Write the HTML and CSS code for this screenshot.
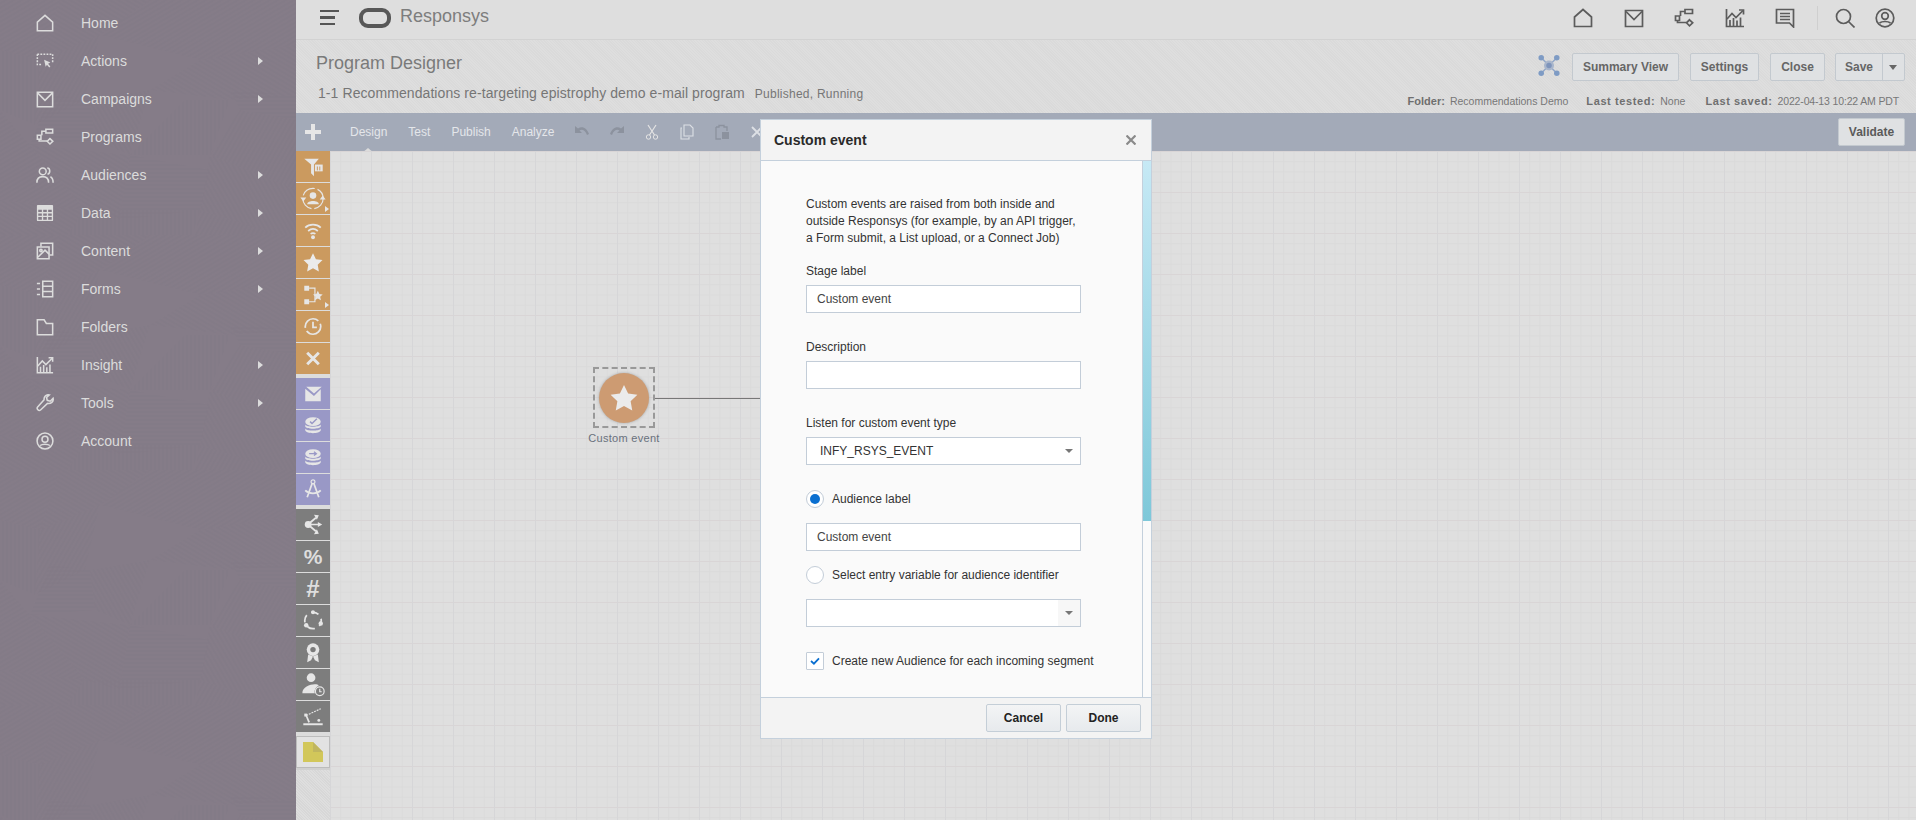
FILE: index.html
```html
<!DOCTYPE html>
<html lang="en">
<head>
<meta charset="utf-8">
<title>Program Designer - Responsys</title>
<link rel="stylesheet" href="styles.css">
</head>
<body>
<svg class="defs" width="0" height="0" aria-hidden="true">
  <defs>
    <symbol id="i-home" viewBox="0 0 20 20"><path d="M1.500 9 10 1.500 18.500 9V18.500H1.500Z"/></symbol>
    <symbol id="i-mail" viewBox="0 0 20 20"><path d="M1.500 2.500H18.500V18.500H1.500Z"/><path d="M2 3.500 10 11.500 18 3.500"/></symbol>
    <symbol id="i-prog" viewBox="0 0 20 20"><path d="M11 1.500H18.500V5.500H11Z"/><path d="M11 3.500H6.500V8"/><path d="M1.500 8H5.500V12.500H1.500Z"/><path d="M3.500 12.500V14.500H12.500"/><path d="M15.500 11.800 18.700 14.800 15.500 17.800 12.500 14.800Z"/></symbol>
    <symbol id="i-actions" viewBox="0 0 20 20"><path stroke-dasharray="2 1.400" d="M1.500 2.500H18.500V12M1.500 2.500V14H7"/><path class="solid" d="M9 8.500 16 11.700 13.400 13 16 16 14.700 17.200 12.200 14.200 10.700 16.500Z"/></symbol>
    <symbol id="i-aud" viewBox="0 0 20 20"><circle cx="7.500" cy="6" r="3.800"/><path d="M1 18.500C1 14 3.500 11.800 7.500 11.800S14 14 14 18.500"/><path d="M12.500 2.300C15.800 2.300 16.500 7.800 12.800 9.300"/><path d="M16 12C18 13 19 15 19 18.500"/></symbol>
    <symbol id="i-data" viewBox="0 0 20 20"><path class="solid" d="M2 1H18A1 1 0 0 1 19 2V18A1 1 0 0 1 18 19H2A1 1 0 0 1 1 18V2A1 1 0 0 1 2 1ZM2.500 6.500V9H6.500V6.500ZM8 6.500V9H12V6.500ZM13.500 6.500V9H17.500V6.500ZM2.500 10.500V13H6.500V10.500ZM8 10.500V13H12V10.500ZM13.500 10.500V13H17.500V10.500ZM2.500 14.500V17.500H6.500V14.500ZM8 14.500V17.500H12V14.500ZM13.500 14.500V17.500H17.500V14.500Z" fill-rule="evenodd"/></symbol>
    <symbol id="i-content" viewBox="0 0 20 20"><path d="M5.500 5V1.500H18.500V14.500H15"/><path d="M1.500 5.500H14.500V18.500H1.500Z"/><circle cx="5.500" cy="9.500" r="1.300"/><path d="M2 17 10 9 14.500 13.500"/></symbol>
    <symbol id="i-forms" viewBox="0 0 20 20"><path d="M7.500 1.500H18.500V18.500H7.500Z"/><path d="M7.500 7H18.500M7.500 12.800H18.500"/><path d="M1 4H4.500M1 10H4.500M1 16H4.500"/></symbol>
    <symbol id="i-folder" viewBox="0 0 20 20"><path d="M1.500 2H9L11.500 6H18.500V18.500H1.500Z"/></symbol>
    <symbol id="i-insight" viewBox="0 0 20 20"><path d="M1.500 1V18.500H19"/><path d="M2 11 7 5.500 11 9.500 18 2.500"/><path d="M14 2H18.500V6.500"/><path d="M5 18V12M8.500 18V10M12 18V12.500M15.500 18V9.500"/></symbol>
    <symbol id="i-tools" viewBox="0 0 20 20"><path d="M19 4.800 15.800 8 12.500 7 11.700 3.800 14.800 1C11.500 .2 8.500 2.800 9 6.500L1.800 14.500C.2 16.500 3 19.500 5 17.800L12.800 10.500C16.500 11.300 19.800 8.300 19 4.800Z"/></symbol>
    <symbol id="i-acct" viewBox="0 0 20 20"><circle cx="10" cy="10" r="8.800"/><circle cx="10" cy="8" r="3.300"/><path d="M4.500 15C7 13 13 13 15.500 15"/></symbol>
    <symbol id="i-msg" viewBox="0 0 20 20"><path d="M1.500 1.500H18.500V19L14.500 15H1.500Z"/><path d="M5 5.500H15M5 8.500H15M5 11.500H15"/></symbol>
    <symbol id="i-search" viewBox="0 0 20 20"><circle cx="8.500" cy="8.500" r="7"/><path d="M13.500 13.500 19.500 19.500"/></symbol>
    <symbol id="i-star" viewBox="0 0 24 24"><path class="solid" d="M12 1.500 15.300 8.300 22.700 9.300 17.300 14.500 18.600 22 12 18.400 5.400 22 6.700 14.500 1.300 9.300 8.700 8.300Z"/></symbol>
  </defs>
</svg>

<div class="page">
  <nav class="side">
    <svg class="texture" width="296" height="820" aria-hidden="true">
      <defs>
        <pattern id="h0" width="4" height="4" patternUnits="userSpaceOnUse"><path d="M0 1H4" stroke="#7c7380" stroke-width="1"/></pattern>
        <pattern id="h90" width="4" height="4" patternUnits="userSpaceOnUse" patternTransform="rotate(90)"><path d="M0 1H4" stroke="#7c7380" stroke-width="1"/></pattern>
        <pattern id="h30" width="4" height="4" patternUnits="userSpaceOnUse" patternTransform="rotate(30)"><path d="M0 1H4" stroke="#7c7380" stroke-width="1"/></pattern>
        <pattern id="h60" width="4" height="4" patternUnits="userSpaceOnUse" patternTransform="rotate(60)"><path d="M0 1H4" stroke="#7c7380" stroke-width="1"/></pattern>
        <pattern id="h120" width="4" height="4" patternUnits="userSpaceOnUse" patternTransform="rotate(120)"><path d="M0 1H4" stroke="#7c7380" stroke-width="1"/></pattern>
        <pattern id="h150" width="4" height="4" patternUnits="userSpaceOnUse" patternTransform="rotate(150)"><path d="M0 1H4" stroke="#7c7380" stroke-width="1"/></pattern>
        <g id="tile" opacity=".4">
          <path fill="url(#h150)" d="M0 0H60L40 60 0 50Z"/>
          <path fill="url(#h30)" d="M60 0H150L100 35 40 60Z"/>
          <path fill="url(#h90)" d="M0 50 40 60 35 125 0 110Z"/>
          <path fill="url(#h120)" d="M40 60 100 35 85 100 35 125Z"/>
          <path fill="url(#h0)" d="M50 95 90 100 95 140 30 145Z"/>
          <path fill="url(#h60)" d="M90 100 150 90 130 155 95 140Z"/>
          <path fill="url(#h150)" d="M150 0H296V45L200 60 100 35Z"/>
          <path fill="url(#h30)" d="M200 60 296 45V95L230 100 150 90Z"/>
          <path fill="url(#h90)" d="M185 100 230 100 210 155 130 155Z"/>
          <path fill="url(#h0)" d="M230 90 296 95V120L240 110Z"/>
          <path fill="url(#h120)" d="M240 110 296 120V190L210 155Z"/>
          <path fill="url(#h150)" d="M0 110 30 145 85 210 0 200Z"/>
          <path fill="url(#h30)" d="M30 145 130 155 120 220 85 210Z"/>
          <path fill="url(#h0)" d="M130 155 210 170 200 210 120 220Z"/>
          <path fill="url(#h60)" d="M210 155 296 190V240L200 210Z"/>
          <path fill="url(#h30)" d="M0 200 85 210 60 245 0 240Z"/>
          <path fill="url(#h90)" d="M85 210 200 210 190 245 60 245Z"/>
          <path fill="url(#h120)" d="M200 210 296 240V260H190Z"/>
        </g>
        <pattern id="tilep" width="296" height="235" patternUnits="userSpaceOnUse"><use href="#tile"/></pattern>
      </defs>
      <rect width="296" height="820" fill="url(#tilep)"/>
    </svg>
    <ul class="menu">
      <li class="mi"><svg class="ic"><use href="#i-home"/></svg><span class="ml">Home</span></li>
      <li class="mi"><svg class="ic"><use href="#i-actions"/></svg><span class="ml">Actions</span><i class="arr"></i></li>
      <li class="mi"><svg class="ic"><use href="#i-mail"/></svg><span class="ml">Campaigns</span><i class="arr"></i></li>
      <li class="mi"><svg class="ic"><use href="#i-prog"/></svg><span class="ml">Programs</span></li>
      <li class="mi"><svg class="ic"><use href="#i-aud"/></svg><span class="ml">Audiences</span><i class="arr"></i></li>
      <li class="mi"><svg class="ic"><use href="#i-data"/></svg><span class="ml">Data</span><i class="arr"></i></li>
      <li class="mi"><svg class="ic"><use href="#i-content"/></svg><span class="ml">Content</span><i class="arr"></i></li>
      <li class="mi"><svg class="ic"><use href="#i-forms"/></svg><span class="ml">Forms</span><i class="arr"></i></li>
      <li class="mi"><svg class="ic"><use href="#i-folder"/></svg><span class="ml">Folders</span></li>
      <li class="mi"><svg class="ic"><use href="#i-insight"/></svg><span class="ml">Insight</span><i class="arr"></i></li>
      <li class="mi"><svg class="ic"><use href="#i-tools"/></svg><span class="ml">Tools</span><i class="arr"></i></li>
      <li class="mi"><svg class="ic"><use href="#i-acct"/></svg><span class="ml">Account</span></li>
    </ul>
  </nav>

  <main class="main">
    <header class="top">
      <div class="burger"><b></b><b class="short"></b><b class="short"></b></div>
      <div class="oval"></div>
      <span class="brand">Responsys</span>
      <div class="topicons">
        <svg class="ti"><use href="#i-home"/></svg>
        <svg class="ti"><use href="#i-mail"/></svg>
        <svg class="ti"><use href="#i-prog"/></svg>
        <svg class="ti"><use href="#i-insight"/></svg>
        <svg class="ti"><use href="#i-msg"/></svg>
        <span class="tsep"></span>
        <svg class="ti ti-s"><use href="#i-search"/></svg>
        <svg class="ti ti-a"><use href="#i-acct"/></svg>
      </div>
    </header>

    <section class="head">
      <div class="head-left">
        <h1 class="title">Program Designer</h1>
        <p class="sub">1-1 Recommendations re-targeting epistrophy demo e-mail program<span class="status">Published, Running</span></p>
      </div>
      <div class="head-right">
        <div class="actions">
          <svg class="netic" viewBox="0 0 24 24"><path d="M4 4 20 20M20 4 4 20" stroke="#8fa6c8" stroke-width="1.500" fill="none"/><circle cx="12" cy="12" r="5.500" fill="#a9b6cc"/><circle cx="12" cy="12" r="3" fill="#7e94bb"/><circle cx="3.500" cy="3.500" r="3" fill="#7e9bc4"/><circle cx="20.500" cy="3.500" r="3" fill="#7e9bc4"/><circle cx="3.500" cy="20.500" r="3" fill="#7e9bc4"/><circle cx="20.500" cy="20.500" r="3" fill="#7e9bc4"/></svg>
          <button class="btn b-sum">Summary View</button>
          <button class="btn b-set">Settings</button>
          <button class="btn b-clo">Close</button>
          <button class="btn b-save"><span class="st">Save</span><span class="caret"></span></button>
        </div>
        <div class="meta">
          <b class="mf">Folder:</b><span class="mv mv1">Recommendations Demo</span>
          <b>Last tested:</b><span class="mv mv2">None</span>
          <b>Last saved:</b><span class="mv mv3">2022-04-13 10:22 AM PDT</span>
        </div>
      </div>
    </section>

    <div class="bar">
      <svg class="plus" viewBox="0 0 14 14"><path d="M7 0V14M0 7H14" stroke="#e6e6e6" stroke-width="3.500"/></svg>
      <div class="tabs">
        <a class="tab on">Design</a><a class="tab">Test</a><a class="tab">Publish</a><a class="tab">Analyze</a>
      </div>
      <div class="tools">
        <svg class="tb" viewBox="0 0 16 16"><path d="M1 2V9H8L5.500 6.500C8 5 11 6 13 11L15 10C13 4 8 1.500 4 4.500Z" fill="#8c929e"/></svg>
        <svg class="tb" viewBox="0 0 16 16"><path d="M15 2V9H8L10.500 6.500C8 5 5 6 3 11L1 10C3 4 8 1.500 12 4.500Z" fill="#8c929e"/></svg>
        <svg class="tb" viewBox="0 0 16 16"><path d="M4 1 10.500 11M12 1 5.500 11" stroke="#e4e4e4" stroke-width="1.200" fill="none"/><circle cx="4.500" cy="13" r="2.200" stroke="#e4e4e4" fill="none"/><circle cx="11.500" cy="13" r="2.200" stroke="#e4e4e4" fill="none"/></svg>
        <svg class="tb" viewBox="0 0 16 16"><path d="M5 1H11L14 4V12H5Z M3 4H2V15H10V13" stroke="#dde0e5" stroke-width="1.100" fill="none"/></svg>
        <svg class="tb" viewBox="0 0 16 16"><path d="M2 3H5V1.500H10V3H13V7M7 15H2V3" stroke="#8c929e" stroke-width="1.300" fill="none"/><path d="M8 8H15V15H8Z" fill="#8c929e"/></svg>
        <svg class="tb" viewBox="0 0 16 16"><path d="M3 3 13 13M13 3 3 13" stroke="#dde0e5" stroke-width="1.800"/></svg>
      </div>
      <button class="btn validate">Validate</button>
    </div>

    <div class="work">
      <aside class="palette">
        <div class="pgroup">
          <div class="pi or"><svg viewBox="0 0 32 32"><path class="pf" d="M7 8H22L17 14V26L14 23V14Z"/><path class="pf" d="M18 14H26V21H18Z"/><path d="M20.500 16V20M23 16V20" stroke="#cb9a5f"/></svg></div>
          <div class="pi or mark"><svg viewBox="0 0 32 32"><circle cx="16" cy="16" r="10.500" class="ps" stroke-dasharray="15 3"/><circle cx="16" cy="13" r="3.400" class="pf"/><path class="pf" d="M10 22C10 17.500 22 17.500 22 22Z"/><path class="pf" d="M3 15 9 15 6 19ZM29 17 23 17 26 13Z"/></svg></div>
          <div class="pi or"><svg viewBox="0 0 32 32"><path class="ps w2" d="M8 13C12 9 20 9 24 13M11 16.500C14 14 18 14 21 16.500M13.500 19.500C15 18.500 17 18.500 18.500 19.500"/><circle class="pf" cx="16" cy="23" r="2"/></svg></div>
          <div class="pi or"><svg viewBox="0 0 32 32"><use href="#i-star" class="star-w" x="5" y="5" width="22" height="22"/></svg></div>
          <div class="pi or mark"><svg viewBox="0 0 32 32"><path class="pf" d="M7 7H12V12H7ZM7 21H12V26H7Z"/><path class="ps" d="M12 9.500H18V23.500H12"/><path class="pf" d="M21 12 22.600 15.500 26 16 23.400 18.300 24.200 22 21 20 17.800 22 18.600 18.300 16 16 19.400 15.500Z"/></svg></div>
          <div class="pi or"><svg viewBox="0 0 32 32"><circle class="ps w2" cx="16" cy="16" r="8" stroke-dasharray="20 3.500"/><path class="ps w2" d="M16 11V17H20"/></svg></div>
          <div class="pi or"><svg viewBox="0 0 32 32"><path class="ps w3" d="M10 10 22 22M22 10 10 22"/></svg></div>
        </div>
        <div class="pgroup">
          <div class="pi pu"><svg viewBox="0 0 32 32"><path class="pf" d="M9 9H25L17 16ZM8 11 17 18.500 24 11.500V24H8Z"/></svg></div>
          <div class="pi pu"><svg viewBox="0 0 32 32"><ellipse class="pf" cx="16" cy="12" rx="8" ry="4.500"/><path class="pf" d="M8 15C9 18 23 18 24 15V17C23 20 9 20 8 17ZM8 19C9 22 23 22 24 19V21C23 25 9 25 8 21Z"/><path d="M13 12 15 14 20 9" stroke="#9998c6" stroke-width="1.500" fill="none"/></svg></div>
          <div class="pi pu"><svg viewBox="0 0 32 32"><ellipse class="pf" cx="16" cy="12" rx="8" ry="4.500"/><path class="pf" d="M8 15C9 18 23 18 24 15V17C23 20 9 20 8 17ZM8 19C9 22 23 22 24 19V21C23 25 9 25 8 21Z"/><path d="M12 12H19M17 10 19.500 12 17 14" stroke="#9998c6" stroke-width="1.300" fill="none"/></svg></div>
          <div class="pi pu"><svg viewBox="0 0 32 32"><circle class="ps" cx="16" cy="8" r="2"/><path class="ps w2" d="M15 10 10 24M17 10 22 24M8 17C12 21 20 21 24 17"/></svg></div>
        </div>
        <div class="pgroup">
          <div class="pi gr"><svg viewBox="0 0 32 32"><circle class="pf" cx="11" cy="16" r="3.500"/><path class="ps w2" d="M12 15 19 9M12 16H23M12 17 19 23"/><path class="pf" d="M17 6 22 6.500 20 11ZM21 13.500 25.500 16 21 18.500ZM17 26 22 25.500 20 21Z"/></svg></div>
          <div class="pi gr"><span class="sym pct">%</span></div>
          <div class="pi gr"><span class="sym">#</span></div>
          <div class="pi gr"><svg viewBox="0 0 32 32"><circle class="ps w2" cx="16" cy="16" r="8.500" stroke-dasharray="8 5.300" stroke-dashoffset="2"/><circle class="pf" cx="16" cy="7.500" r="2"/><circle class="pf" cx="24" cy="19" r="2.300"/><circle class="pf" cx="9" cy="21" r="2.300"/></svg></div>
          <div class="pi gr"><svg viewBox="0 0 32 32"><circle class="pf" cx="16" cy="13" r="6.500"/><circle cx="16" cy="13" r="2.800" fill="#7b7b7b"/><path class="pf" d="M11 18 10 26 14 24 16 20ZM21 18 22 26 18 24 16 20Z"/></svg></div>
          <div class="pi gr"><svg viewBox="0 0 32 32"><circle class="pf" cx="14" cy="9" r="4.500"/><path class="pf" d="M5 25C5 16 20 14 22 17 18 19 17 23 18 25Z"/><circle class="ps" cx="23" cy="23" r="4.500"/><path class="ps" d="M23 20.500V23.500H25"/></svg></div>
          <div class="pi gr"><svg viewBox="0 0 32 32"><path class="ps" stroke-dasharray="2 1" d="M9 15 24 8"/><path class="ps w2" d="M9 15 12 22"/><circle class="pf" cx="22" cy="20" r="1.500"/><path class="pf" d="M6 23H26V25H6Z"/><path class="pf" d="M7 13H10V16H7Z"/></svg></div>
        </div>
        <div class="note"><svg viewBox="0 0 20 20"><path d="M0 0H10L20 10V20H0Z" fill="#d2c75a"/><path d="M10 0 20 10H10Z" fill="#c0b65f"/></svg></div>
      </aside>

      <div class="canvas">
        <div class="conn"></div>
        <div class="node">
          <div class="nbox"><div class="ncirc"><svg viewBox="0 0 24 24"><use href="#i-star" class="star-w"/></svg></div></div>
          <div class="nlabel">Custom event</div>
        </div>
      </div>
    </div>
  </main>

  <div class="modal">
    <div class="m-head"><span class="m-title">Custom event</span><svg class="m-x" viewBox="0 0 10 10"><path d="M.5 .5 9.500 9.500M9.500 .5 .5 9.500" stroke="#8a8a8a" stroke-width="2.200"/></svg></div>
    <div class="m-body">
      <div class="m-form">
        <p class="intro">Custom events are raised from both inside and<br>outside Responsys (for example, by an API trigger,<br>a Form submit, a List upload, or a Connect Job)</p>
        <label class="lab l1">Stage label</label>
        <div class="field"><span class="fv">Custom event</span></div>
        <label class="lab l2">Description</label>
        <div class="field"></div>
        <label class="lab l2">Listen for custom event type</label>
        <div class="field sel"><span class="sv">INFY_RSYS_EVENT</span><span class="sa"><i></i></span></div>
        <div class="opt o1"><span class="radio on"></span><span>Audience label</span></div>
        <div class="field f3"><span class="fv">Custom event</span></div>
        <div class="opt o2"><span class="radio"></span><span>Select entry variable for audience identifier</span></div>
        <div class="field sel f4"><span class="sv"></span><span class="sa grey"><i></i></span></div>
        <div class="opt o3"><span class="check"><svg viewBox="0 0 18 18"><path d="M4.500 9 7.800 12 13.500 6" stroke="#0a6fd0" stroke-width="2" fill="none"/></svg></span><span>Create new Audience for each incoming segment</span></div>
      </div>
      <div class="scroll"><div class="thumb"></div></div>
    </div>
    <div class="m-foot"><button class="mb">Cancel</button><button class="mb">Done</button></div>
  </div>
</div>
</body>
</html>
```

FILE: styles.css
```css
* { box-sizing: border-box; }
html, body { margin: 0; padding: 0; height: 100%; }
body { font-family: "Liberation Sans", Arial, sans-serif; overflow: hidden; background: #dcdcdc; }
.defs { position: absolute; }
.solid { fill: currentColor; stroke: none; }

.page { display: flex; width: 1916px; height: 820px; position: relative; overflow: hidden; }

/* sidebar */
.side { width: 296px; flex: none; height: 820px; background: #857c88; position: relative; color: #ddd; }
.texture { position: absolute; left: 0; top: 0; }
.menu { list-style: none; margin: 0; padding: 4px 0 0; position: relative; }
.mi { display: flex; align-items: center; height: 38px; padding-left: 36px; position: relative; }
.ic { width: 18px; height: 18px; fill: none; stroke: currentColor; stroke-width: 1.700; color: #dcdcdc; flex: none; }
.ml { margin-left: 27px; font-size: 14px; color: #dcdcdc; }
.arr { position: absolute; left: 258px; top: 15px; width: 0; height: 0; border-left: 5px solid #dcdcdc; border-top: 4.500px solid transparent; border-bottom: 4.500px solid transparent; }

/* main column */
.main { flex: 1; min-width: 0; display: flex; flex-direction: column; height: 820px; }
.top { height: 40px; flex: none; display: flex; align-items: center; background: #dedede; border-bottom: 1px solid #d2d2d2; padding-left: 24px; }
.burger { width: 19px; display: flex; flex-direction: column; gap: 4px; margin-top: -4px; }
.burger b { display: block; height: 2.500px; width: 19px; background: #555; }
.burger .short { width: 15px; }
.oval { width: 32px; height: 20px; margin-left: 20px; border: 4px solid #575757; border-radius: 9px; margin-top: -4px; }
.brand { margin-left: 9px; font-size: 18px; color: #7d7d7d; margin-top: -6px; }
.topicons { margin-left: auto; display: flex; align-items: center; padding-right: 21px; margin-top: -4px; }
.ti { width: 20px; height: 20px; margin-left: 30.500px; fill: none; stroke: #5c5c5c; stroke-width: 1.700; color: #5c5c5c; }
.tsep { width: 1px; height: 24px; background: #cfcfcf; margin-left: 22px; }
.ti-s { margin-left: 17px; }
.ti-a { margin-left: 20px; }

.head { height: 73px; flex: none; display: flex; justify-content: space-between; padding: 0 11px 0 20px; background: #dcdcdc repeating-linear-gradient(45deg, #dadada 0 1px, #dedede 1px 2px); }
.title { margin: 13px 0 0; font-size: 18px; font-weight: 400; color: #7a7a7a; line-height: 21px; }
.sub { margin: 11px 0 0 2px; font-size: 14px; color: #767676; line-height: 16px; letter-spacing: .08px; }
.status { margin-left: 10px; font-size: 12px; letter-spacing: .25px; }
.head-right { display: flex; flex-direction: column; align-items: flex-end; }
.actions { display: flex; align-items: center; margin-top: 13px; }
.netic { width: 22px; height: 23px; margin-right: 12px; margin-top: -4px; }
.btn { height: 28px; border: 1px solid #c3c9cf; border-radius: 2px; background: #dfe1e3; font: bold 12px "Liberation Sans", Arial, sans-serif; color: #666; padding: 0; }
.b-sum { width: 107px; }
.b-set { width: 69px; margin-left: 11px; }
.b-clo { width: 55px; margin-left: 11px; }
.b-save { width: 70px; margin-left: 10px; display: flex; align-items: center; }
.st { width: 47px; border-right: 1px solid #c3c9cf; height: 26px; line-height: 26px; }
.caret { margin-left: 6px; width: 0; height: 0; border-top: 5px solid #666; border-left: 4.500px solid transparent; border-right: 4.500px solid transparent; }
.meta { margin-top: 14px; font-size: 10.500px; line-height: 13px; color: #777; padding-right: 6px; display: flex; white-space: nowrap; }
.meta b { color: #6f6f6f; margin-right: 5px; font-size: 11px; letter-spacing: .6px; }
.meta .mf { letter-spacing: 0; }
.mv1 { margin-right: 18px; }
.mv2 { margin-right: 20px; }
.mv3 { letter-spacing: -.15px; }

.bar { height: 38px; flex: none; background: #a3aab8; display: flex; align-items: center; padding-left: 9px; position: relative; }
.plus { width: 16px; height: 16px; flex: none; }
.tabs { display: flex; margin-left: 29px; gap: 21px; }
.tab { font-size: 12px; color: #e4e6ea; position: relative; }
.tab.on::after { content: ""; position: absolute; left: 12px; bottom: -14px; width: 0; height: 0; border-bottom: 5px solid #dcdcdc; border-left: 6px solid transparent; border-right: 6px solid transparent; }
.tools { display: flex; align-items: center; margin-left: 20px; gap: 19px; }
.tb { width: 16px; height: 16px; flex: none; }
.validate { margin-left: auto; margin-right: 11px; width: 67px; color: #5a5a5a; }

.work { flex: 1; min-height: 0; display: flex; }
.palette { width: 34px; flex: none; background: #d8d8d8 repeating-linear-gradient(45deg, #d7d7d7 0 1px, #dedede 1px 2px); }
.pgroup { display: flex; flex-direction: column; gap: 1px; padding-bottom: 4px; background: #dcdcdc; }
.pi { height: 31px; display: flex; align-items: center; justify-content: center; position: relative; }
.pi svg { width: 32px; height: 31px; }
.or { background: #cb9a5f; }
.pu { background: #9998c6; }
.gr { background: #7d7d7d; }
.pf { fill: #e6e6e6; stroke: none; }
.ps { fill: none; stroke: #e6e6e6; stroke-width: 1.200; }
.w2 { stroke-width: 1.800; }
.w3 { stroke-width: 3; }
.star-w { color: #ebebeb; }
.mark::after { content: ""; position: absolute; right: 1px; bottom: 2px; width: 0; height: 0; border-left: 4px solid #e6e6e6; border-top: 3.500px solid transparent; border-bottom: 3.500px solid transparent; }
.sym { font-size: 24px; font-weight: 700; color: #dedede; line-height: 31px; }
.sym.pct { font-size: 21px; }
.note { height: 32px; border: 1px solid #bcbcbc; background: #e2e2e2; display: flex; align-items: center; justify-content: center; box-shadow: 0 2px 0 #d0d0d0; }
.note svg { width: 20px; height: 20px; }

.canvas { flex: 1; position: relative; background-color: #dfdfdf;
  background-image:
    linear-gradient(to right, #d6d6d8 1px, transparent 1px),
    linear-gradient(to bottom, #d9d5d6 1px, transparent 1px),
    linear-gradient(to right, #dadada 1px, transparent 1px),
    linear-gradient(to bottom, #dadada 1px, transparent 1px);
  background-size: 41px 41px, 41px 41px, 10.250px 10.250px, 10.250px 10.250px;
}
.conn { position: absolute; left: 325px; top: 247px; width: 110px; height: 1px; background: #777; }
.node { position: absolute; left: 252px; top: 216px; width: 84px; display: flex; flex-direction: column; align-items: center; }
.nbox { width: 62px; height: 61px; border: 2px dashed #999; display: flex; align-items: center; justify-content: center; }
.ncirc { width: 50px; height: 50px; border-radius: 50%; background: #cd9b72; display: flex; align-items: center; justify-content: center; box-shadow: 0 0 3px rgba(90,90,90,.45); }
.ncirc svg { width: 30px; height: 30px; }
.nlabel { font-size: 11px; color: #69717d; margin-top: 3px; line-height: 14px; white-space: nowrap; letter-spacing: .3px; }

/* modal */
.modal { position: absolute; left: 760px; top: 119px; width: 392px; height: 620px; background: #fafafa; border: 1px solid #c4d0dc; display: flex; flex-direction: column; }
.m-head { height: 41px; flex: none; background: #f3f3f3; border-bottom: 1px solid #c4d0dc; display: flex; align-items: center; justify-content: space-between; padding: 0 15px 0 13px; }
.m-title { font-size: 14px; font-weight: 700; color: #2a2a2a; }
.m-x { width: 10px; height: 10px; }
.m-body { flex: 1; min-height: 0; display: flex; justify-content: space-between; }
.m-form { padding: 35px 0 0 45px; width: 321px; font-size: 12px; color: #333; }
.intro { margin: 0; line-height: 17px; }
.lab { display: block; line-height: 17px; height: 17px; margin-bottom: 5px; }
.l1 { margin-top: 16px; }
.l2 { margin-top: 26px; }
.field { width: 275px; height: 28px; border: 1px solid #c3cdd8; background: #fff; line-height: 26px; padding-left: 10px; display: flex; }
.fv { color: #444; }
.sel { padding-left: 0; justify-content: space-between; background: #fff; }
.sv { padding-left: 13px; color: #333; }
.sa { width: 22px; display: flex; align-items: center; justify-content: center; }
.sa.grey { background: #f7f7f7; }
.sa i { display: block; width: 0; height: 0; border-top: 4px solid #777; border-left: 4px solid transparent; border-right: 4px solid transparent; }
.opt { display: flex; align-items: center; height: 18px; gap: 8px; color: #333; white-space: nowrap; }
.o1 { margin-top: 25px; }
.f3 { margin-top: 15px; }
.o2 { margin-top: 15px; }
.f4 { margin-top: 15px; }
.o3 { margin-top: 25px; }
.radio { width: 18px; height: 18px; border-radius: 50%; border: 1px solid #c3cdd8; background: #fff; flex: none; position: relative; }
.radio.on::after { content: ""; position: absolute; left: 3px; top: 3px; width: 10px; height: 10px; border-radius: 50%; background: #0a6fd0; }
.check { width: 18px; height: 18px; border: 1px solid #c3cdd8; background: #fff; flex: none; border-radius: 1px; display: block; }
.check svg { display: block; width: 16px; height: 16px; }
.scroll { width: 9px; flex: none; border-left: 1px solid #c4d0dc; }
.thumb { height: 360px; background: linear-gradient(to bottom, #c6e9f5, #7ec8d9); }
.m-foot { height: 41px; flex: none; border-top: 1px solid #c4d0dc; background: #f3f3f3; display: flex; justify-content: flex-end; align-items: center; gap: 5px; padding-right: 10px; }
.mb { width: 75px; height: 28px; border: 1px solid #c4ced7; border-radius: 2px; background: linear-gradient(to bottom, #f3f4f5, #e7eaed); font: bold 12px "Liberation Sans", Arial, sans-serif; color: #222; padding: 0; }
```
